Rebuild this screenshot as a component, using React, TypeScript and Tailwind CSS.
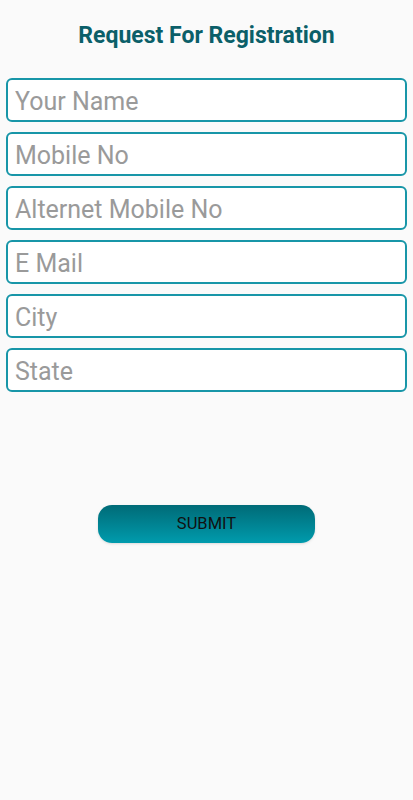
import React from 'react'

const fields = ['Your Name', 'Mobile No', 'Alternet Mobile No', 'E Mail', 'City', 'State']

function App() {
    return (
        <div className="min-h-[800px] w-full bg-[#fafafa] font-['Roboto',sans-serif]">
            <div className="pt-[22px] text-center text-[23px] font-bold leading-[28px] text-[#0b5f69]">
                Request For Registration
            </div>

            <div className="mt-[28px] flex flex-col gap-[10px] px-[6px]">
                {fields.map((f) => (
                    <input
                        key={f}
                        placeholder={f}
                        className="h-[44px] w-full rounded-[6px] border-2 border-[#1896a8] bg-white px-[7px] pt-[2px] text-[25px] text-gray-800 outline-none placeholder:text-[#9a9a9a]"
                    />
                ))}
            </div>

            <div className="mt-[113px] flex justify-center">
                <button className="h-[38px] w-[217px] rounded-[14px] bg-gradient-to-b from-[#006b77] to-[#009bad] text-[16.5px] text-[#111] shadow-sm">
                    SUBMIT
                </button>
            </div>
        </div>
    )
}

export default App
